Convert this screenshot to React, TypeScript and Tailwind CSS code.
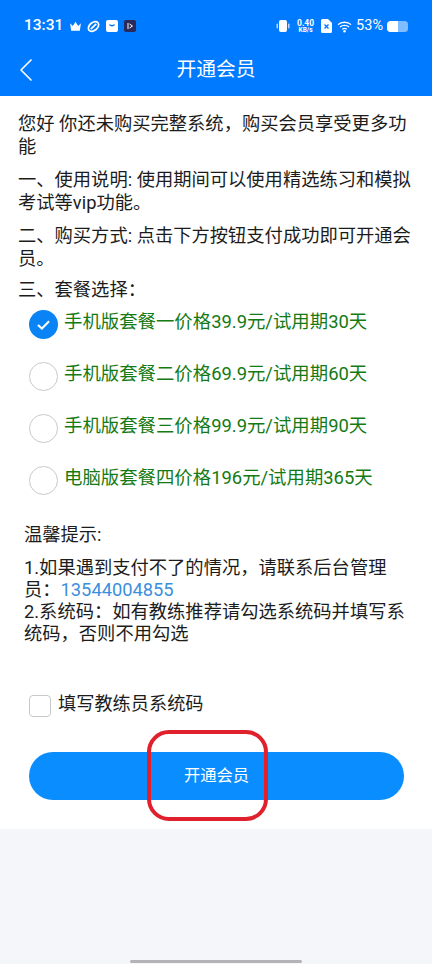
import React from 'react';
import { ChevronLeft } from 'lucide-react';

const cjk = { fontFamily: '"Roboto", "Noto Sans CJK SC", sans-serif' };

const plans = [
  { label: '手机版套餐一价格39.9元/试用期30天', checked: true },
  { label: '手机版套餐二价格69.9元/试用期60天', checked: false },
  { label: '手机版套餐三价格99.9元/试用期90天', checked: false },
  { label: '电脑版套餐四价格196元/试用期365天', checked: false },
];

const StatusBar = () => (
  <div className="flex h-[52px] items-center pl-6 pr-[24px] text-white">
    <span className="text-[15.5px] font-medium leading-none">13:31</span>
    <svg viewBox="0 0 12 12" className="ml-[6px] h-[13px] w-[13px]" fill="white">
      <path d="M1 3l2.5 2.5L6 1.5l2.5 4L11 3l-1 7H2z" />
    </svg>
    <svg viewBox="0 0 12 12" className="ml-[5px] h-[13px] w-[13px]" fill="none" stroke="white" strokeWidth="1.6">
      <ellipse cx="6" cy="6" rx="5.4" ry="3.6" transform="rotate(-40 6 6)" />
      <path d="M3.5 8.5L8.5 3.5" />
    </svg>
    <span className="ml-[6px] flex h-3 w-3 items-start justify-center rounded-[2px] bg-white">
      <svg viewBox="0 0 12 12" className="h-3 w-3" fill="none" stroke="#007aff" strokeWidth="1.4">
        <path d="M3.5 4.5c.8 1.6 4.2 1.6 5 0" />
      </svg>
    </span>
    <span className="ml-[6px] flex h-3 w-3 items-center justify-center rounded-[2px] bg-[#2a2a5a]">
      <svg viewBox="0 0 12 12" className="h-3 w-3" fill="none" stroke="white" strokeWidth="1">
        <path d="M4 3v6M5.5 4l3 2-3 2" />
      </svg>
    </span>
    <span className="ml-auto flex items-center">
      <svg viewBox="0 0 16 14" className="h-[14px] w-[16px]" fill="white">
        <rect x="4" y="1" width="8" height="12" rx="2" />
        <rect x="1.5" y="4.5" width="1.5" height="5" rx="0.7" opacity="0.7" />
        <rect x="13" y="4.5" width="1.5" height="5" rx="0.7" opacity="0.7" />
      </svg>
      <span className="ml-[4px] flex w-[21px] flex-col items-center text-[8.5px] font-bold leading-[8px]">
        <span>0.40</span>
        <span className="text-[6.5px] leading-[7px]">KB/s</span>
      </span>
      <svg viewBox="0 0 11 14" className="ml-[5px] h-[14px] w-[11px]">
        <path d="M1.5 0H7l4 4v8.5a1.5 1.5 0 0 1-1.5 1.5h-8A1.5 1.5 0 0 1 0 12.5v-11A1.5 1.5 0 0 1 1.5 0z" fill="white" />
        <path d="M3.5 5.5l4 4M7.5 5.5l-4 4" stroke="#007aff" strokeWidth="1.4" />
      </svg>
      <svg viewBox="0 0 16 13" className="ml-[5px] h-[13px] w-[15px]" fill="none" stroke="white" strokeWidth="1.4">
        <path d="M1 4.5c3.8-3.4 10.2-3.4 14 0" />
        <path d="M3.2 7c2.6-2.2 7-2.2 9.6 0" />
        <path d="M5.6 9.4c1.4-1 3.4-1 4.8 0" />
        <circle cx="8" cy="11.6" r="0.7" fill="white" />
      </svg>
      <span className="ml-[4px] text-[14.5px] leading-none">53%</span>
      <span className="ml-[4px] flex h-[11px] w-[21px] overflow-hidden rounded-[3.5px] bg-white/50">
        <span className="h-full w-[11px] rounded-l-[3.5px] bg-white" />
      </span>
    </span>
  </div>
);

const PlanRow = ({ label, checked }: { label: string; checked: boolean }) => (
  <div className="flex h-[52px] items-start">
    {checked ? (
      <span className="flex h-[29px] w-[29px] items-center justify-center rounded-full bg-[#0a84f5]">
        <svg viewBox="0 0 24 24" className="h-[19px] w-[19px]" fill="none" stroke="white" strokeWidth="2.6">
          <path d="M5 12.5l5 4.5L19 8" />
        </svg>
      </span>
    ) : (
      <span className="h-[29px] w-[29px] rounded-full border border-[#c9c9c9] bg-white" />
    )}
    <span className="ml-[6px] whitespace-nowrap text-[18.4px] leading-[24px] text-[#147a14]">{label}</span>
  </div>
);

export default function App() {
  return (
    <div className="relative flex h-[964px] w-[432px] flex-col overflow-hidden bg-[#f5f6fa]" style={cjk}>
      <header className="h-[96px] shrink-0 bg-[#007aff]">
        <StatusBar />
        <div className="relative flex h-[36px] items-center justify-center">
          <ChevronLeft className="absolute left-[6px] top-1/2 h-[40px] w-[40px] -translate-y-1/2 text-white" strokeWidth={1} />
          <span className="text-[19.8px] text-white">开通会员</span>
        </div>
      </header>

      <main className="h-[733px] shrink-0 bg-white pt-[16px]">
        <div className="pl-[18px] pr-[14px] text-[18.3px] leading-[23px] text-[#1c1c1c]">
          <p>您好 你还未购买完整系统，购买会员享受更多功能</p>
          <p className="mt-[10px]">一、使用说明: 使用期间可以使用精选练习和模拟考试等vip功能。</p>
          <p className="mt-[10px]">二、购买方式: 点击下方按钮支付成功即可开通会员。</p>
          <p className="mt-[8px]">三、套餐选择：</p>
        </div>

        <div className="mt-[9px] pl-[29px]">
          {plans.map((p) => (
            <PlanRow key={p.label} label={p.label} checked={p.checked} />
          ))}
        </div>

        <div className="mt-[6px] pl-6 pr-[20px] text-[18.3px] leading-[22px] text-[#1c1c1c]">
          <p>温馨提示:</p>
          <p className="mt-[11px]">
            1.如果遇到支付不了的情况，请联系后台管理员：<span className="text-[#3a8fdc]">13544004855</span>
          </p>
          <p>2.系统码：如有教练推荐请勾选系统码并填写系统码，否则不用勾选</p>
        </div>

        <label className="ml-[29px] mt-[48px] flex items-start">
          <span className="mt-[2px] h-[22px] w-[22px] rounded-[4px] border border-[#c9c9c9] bg-white" />
          <span className="ml-[7px] text-[18.2px] leading-[22px] text-[#1c1c1c]">填写教练员系统码</span>
        </label>

        <button className="mx-[29px] mt-[35px] flex h-[48px] w-[375px] items-center justify-center rounded-full bg-[#0a8dff] text-[16.3px] text-white">
          开通会员
        </button>
      </main>

      {/* red annotation drawn over the button */}
      <div className="absolute left-[147px] top-[730px] h-[91px] w-[121px] rounded-[22px] border-[4px] border-[#e0202c]" />
      <div className="absolute bottom-[1px] left-[130px] h-[3px] w-[172px] rounded-full bg-[#b4b4b8]" />
    </div>
  );
}
